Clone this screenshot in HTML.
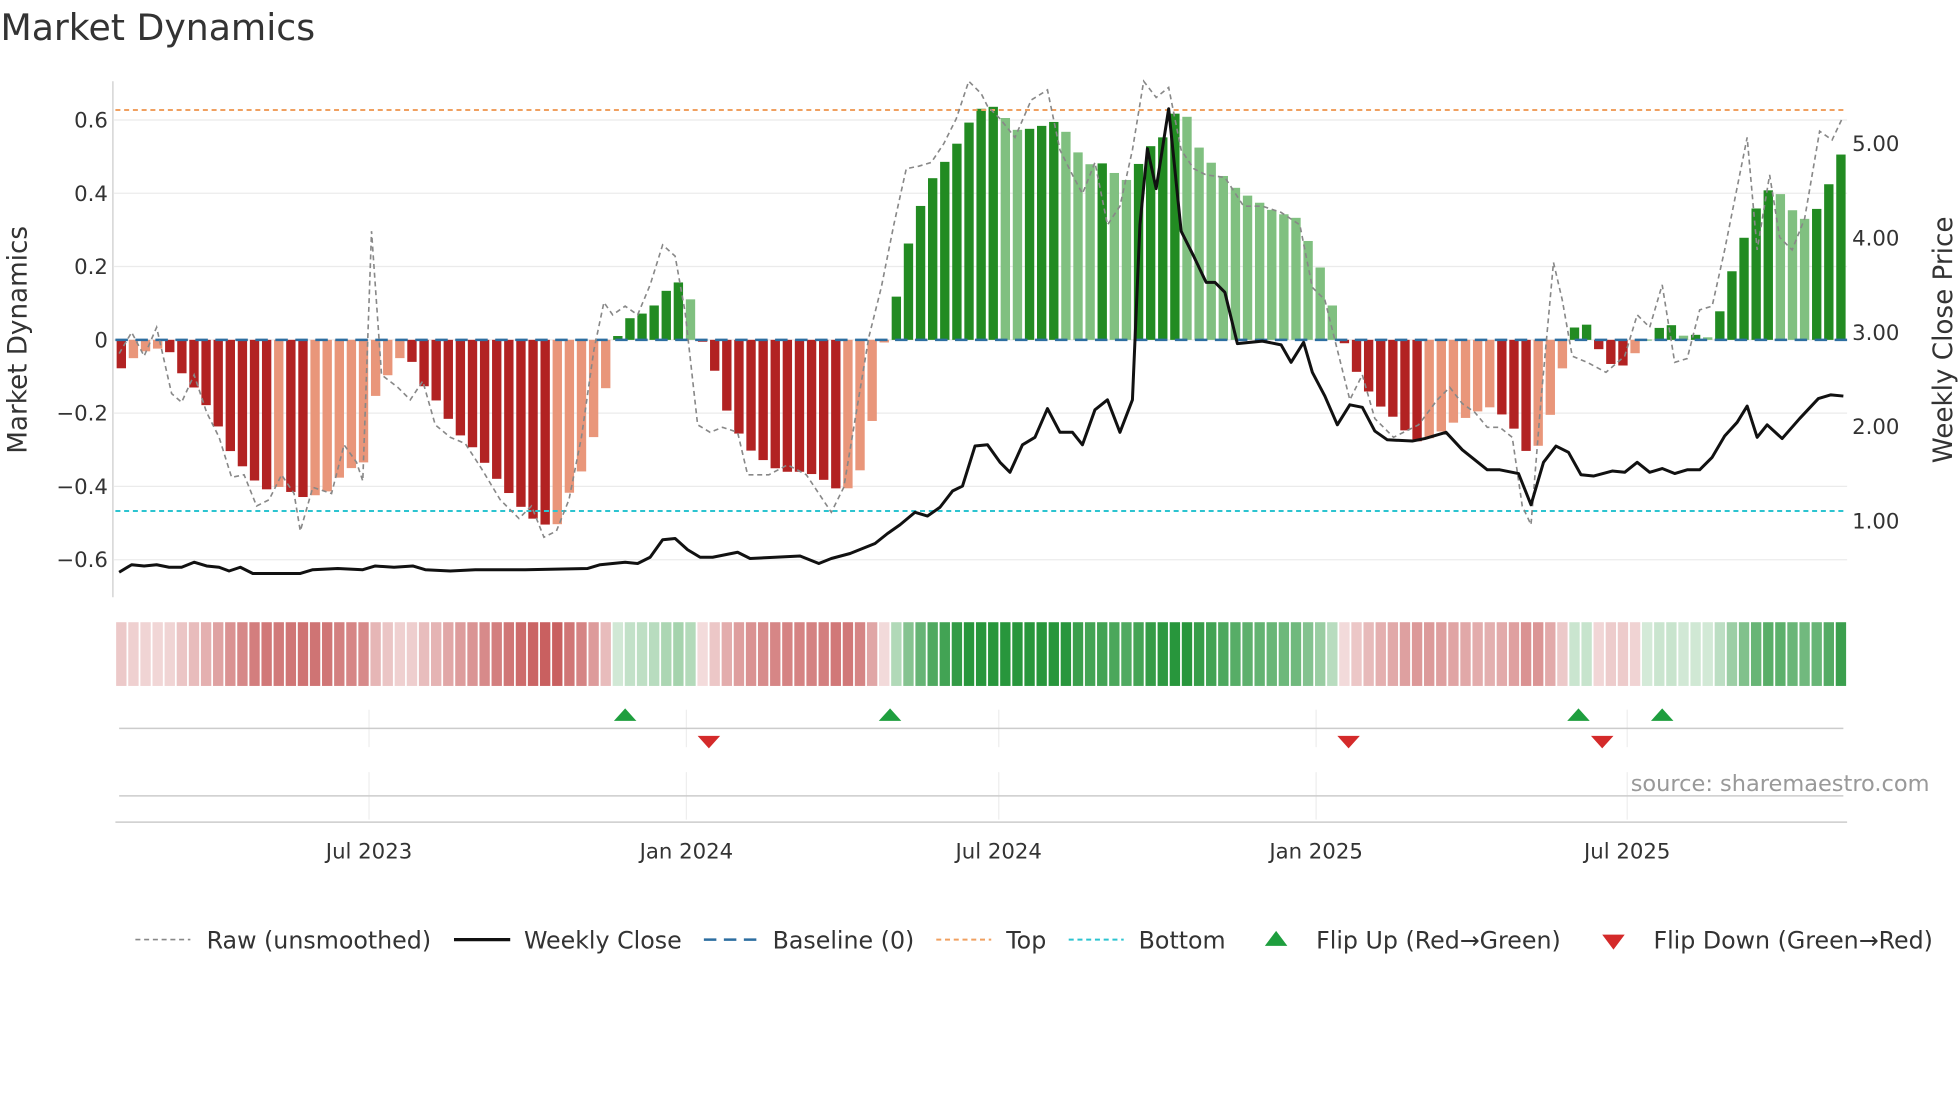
<!DOCTYPE html>
<html><head><meta charset="utf-8">
<style>
html,body{margin:0;padding:0;background:#fff;}
svg{display:block;}
text{font-family:"DejaVu Sans","Liberation Sans",sans-serif;fill:#333;}
</style></head>
<body>
<svg id="s" width="1960" height="1102" viewBox="0 0 1568 882" xmlns="http://www.w3.org/2000/svg">
<text x="0" y="32" font-size="29" fill="#333">Market Dynamics</text>
<g id="grid"></g>
<g id="bars"></g>
<g id="heat"></g>
<g id="lines"></g>
<g id="axes"></g>
</svg>
<script>
const NS="http://www.w3.org/2000/svg";
function el(p,t,a,txt){const e=document.createElementNS(NS,t);for(const k in a)e.setAttribute(k,a[k]);if(txt!==undefined)e.textContent=txt;document.getElementById(p).appendChild(e);return e;}
function interp(kp,x){if(x<=kp[0])return kp[1];for(let i=0;i<kp.length-2;i+=2){if(x>=kp[i]&&x<=kp[i+2]){const t=(x-kp[i])/(kp[i+2]-kp[i]);return kp[i+1]+t*(kp[i+3]-kp[i+1]);}}return kp[kp.length-1];}
const vy=v=>272-293.3*v;
[0.6,0.4,0.2,0,-0.2,-0.4,-0.6].forEach(v=>{const y=vy(v);el("grid","line",{x1:91,x2:1478,y1:y,y2:y,stroke:"#ebebeb","stroke-width":1});
el("axes","text",{x:86,y:y+6,"text-anchor":"end","font-size":17},(v===0?"0":v.toFixed(1).replace("-","−")));});
[[5,"5.00"],[4,"4.00"],[3,"3.00"],[2,"2.00"],[1,"1.00"]].forEach(([p,t])=>{const y=266-75.5*(p-3);el("axes","text",{x:1482,y:y+6,"font-size":17},t);});
el("axes","line",{x1:90,x2:90,y1:65,y2:478,stroke:"#ccc","stroke-width":1});
el("axes","text",{x:0,y:0,"font-size":21,transform:"translate(21,272) rotate(-90)","text-anchor":"middle"},"Market Dynamics");
el("axes","text",{x:0,y:0,"font-size":21,transform:"translate(1562,272) rotate(-90)","text-anchor":"middle"},"Weekly Close Price");
const bk=[92,-0.12,100,-0.05,110,-0.05,120,-0.02,135,-0.03,145,-0.09,160,-0.15,175,-0.24,185,-0.31,200,-0.37,210,-0.41,225,-0.40,240,-0.43,260,-0.42,270,-0.38,280,-0.35,290,-0.35,298,-0.17,305,-0.12,318,-0.06,325,-0.02,335,-0.11,350,-0.17,365,-0.25,380,-0.30,395,-0.37,405,-0.41,415,-0.45,430,-0.50,445,-0.51,455,-0.42,470,-0.33,482,-0.17,490,-0.05,497,0.05,520,0.08,532,0.13,540,0.16,548,0.15,558,0.06,563,-0.02,570,-0.06,578,-0.17,590,-0.25,600,-0.30,615,-0.34,625,-0.36,640,-0.36,655,-0.37,665,-0.40,672,-0.41,685,-0.40,692,-0.30,703,-0.15,708,0.01,712,0.02,722,0.21,733,0.33,742,0.42,752,0.47,762,0.51,772,0.58,790,0.65,800,0.62,815,0.57,830,0.58,848,0.60,860,0.52,875,0.47,887,0.49,895,0.43,905,0.44,917,0.52,930,0.55,945,0.65,960,0.52,975,0.46,990,0.41,1005,0.38,1020,0.35,1040,0.33,1050,0.24,1062,0.16,1070,0.03,1075,0.0,1080,-0.06,1090,-0.11,1100,-0.17,1112,-0.20,1125,-0.25,1135,-0.28,1150,-0.26,1160,-0.23,1175,-0.21,1190,-0.18,1205,-0.21,1215,-0.26,1225,-0.33,1235,-0.26,1245,-0.16,1252,-0.05,1258,0.0,1262,0.07,1270,0.04,1278,-0.02,1290,-0.07,1300,-0.07,1310,-0.03,1318,0.0,1330,0.04,1340,0.04,1350,0.0,1360,0.02,1370,0.0,1378,0.10,1388,0.21,1398,0.30,1408,0.38,1418,0.42,1430,0.38,1440,0.32,1448,0.34,1458,0.37,1466,0.45,1475,0.52];
const N=143,x0=92,sp=(1478-92)/N;let prev=0;
for(let i=0;i<N;i++){const x=x0+i*sp;const v=interp(bk,x+sp/2);let c;
 if(v>=0)c=(v>=prev)?"#228b22":"#80c080";else c=(v<=prev)?"#b22222":"#e9967a";
 const y=vy(v);el("bars","rect",{x:x+1,width:sp-2.2,y:Math.min(y,272),height:Math.max(Math.abs(y-272),0.5),fill:c});
 const a=Math.min(1,0.2+Math.abs(v)*1.4);
 const hc=v>=0?`rgba(40,150,60,${a})`:`rgba(195,80,80,${a})`;
 el("heat","rect",{x:x+0.6,width:sp-1.4,y:498,height:51,fill:hc});
 prev=v;}
el("lines","line",{x1:92,x2:1478,y1:88,y2:88,stroke:"#f0a060","stroke-width":1.6,"stroke-dasharray":"4,3"});
el("lines","line",{x1:92,x2:1478,y1:409,y2:409,stroke:"#2cc4d0","stroke-width":1.6,"stroke-dasharray":"4,3"});
el("lines","line",{x1:92,x2:1478,y1:272,y2:272,stroke:"#2d6ea0","stroke-width":2,"stroke-dasharray":"10,6"});
const raw=[95,283,105,266,115,285,125,262,137,315,145,322,155,300,165,330,175,350,185,382,195,380,205,405,215,400,225,380,235,395,240,425,250,390,265,395,275,356,285,370,290,385,297,185,305,300,318,310,328,320,338,305,348,340,360,350,372,355,385,375,400,400,415,415,425,405,435,430,445,425,455,400,465,350,475,280,483,242,490,252,500,245,510,252,520,228,530,196,540,205,548,250,558,340,568,346,578,342,590,346,598,380,615,380,630,372,645,380,655,395,665,410,675,390,685,330,695,270,705,230,715,180,725,135,735,133,745,130,755,115,765,95,775,65,785,75,790,85,800,95,812,110,825,80,838,72,848,120,858,140,866,155,876,130,886,180,896,165,906,120,915,65,925,78,935,70,945,120,955,135,965,140,980,142,995,165,1010,165,1025,170,1040,180,1050,230,1060,240,1070,280,1080,320,1090,300,1100,335,1115,350,1125,345,1135,340,1150,320,1160,310,1170,323,1180,330,1190,342,1200,342,1210,350,1218,405,1225,420,1233,320,1243,210,1250,240,1258,285,1270,290,1285,298,1300,285,1310,252,1320,262,1330,228,1340,290,1350,287,1360,248,1370,245,1380,200,1390,150,1398,110,1406,200,1416,140,1424,190,1434,200,1444,175,1456,105,1466,112,1474,95];
const pr=[95,458,105,452,115,453,125,452,135,454,145,454,155,450,165,453,175,454,183,457,192,454,202,459,240,459,250,456,270,455,290,456,300,453,315,454,330,453,340,456,360,457,380,456,400,456,420,456,470,455,480,452,500,450,510,451,520,446,530,432,540,431,550,440,560,446,570,446,590,442,600,447,620,446,640,445,655,451,665,447,680,443,700,435,710,427,720,420,732,410,742,413,752,406,762,393,770,389,780,357,790,356,800,370,808,378,818,356,828,350,838,327,848,346,858,346,866,356,876,328,886,320,896,346,906,320,912,180,918,119,925,151,935,87,945,185,955,205,965,226,972,226,980,234,990,275,1010,273,1025,276,1033,290,1043,274,1050,298,1060,317,1070,340,1080,324,1090,326,1100,345,1110,352,1130,353,1140,351,1157,346,1170,360,1190,376,1200,376,1215,379,1225,404,1235,370,1245,357,1255,362,1265,380,1275,381,1290,377,1300,378,1310,370,1320,378,1330,375,1340,379,1350,376,1360,376,1370,366,1380,349,1390,338,1398,325,1406,350,1414,340,1426,351,1440,335,1455,319,1465,316,1475,317];
const pts=a=>{let s="";for(let i=0;i<a.length;i+=2)s+=a[i]+","+a[i+1]+" ";return s;};
el("lines","polyline",{points:pts(raw),fill:"none",stroke:"#888","stroke-width":1.3,"stroke-dasharray":"4,3"});
el("lines","polyline",{points:pts(pr),fill:"none",stroke:"#111","stroke-width":2.4,"stroke-linejoin":"round"});
[295,549,799,1053,1302].forEach(x=>{el("axes","line",{x1:x,x2:x,y1:568,y2:598,stroke:"#eee"});el("axes","line",{x1:x,x2:x,y1:618,y2:656,stroke:"#eee"});});
el("axes","line",{x1:95,x2:1475,y1:583,y2:583,stroke:"#ccc","stroke-width":1.2});
el("axes","line",{x1:95,x2:1475,y1:637,y2:637,stroke:"#ccc","stroke-width":1.2});
el("axes","line",{x1:92,x2:1478,y1:658,y2:658,stroke:"#ccc","stroke-width":1.2});
[500,712,1263,1330].forEach(x=>el("axes","path",{d:`M${x-9},577 L${x+9},577 L${x},567 Z`,fill:"#1e9e3e"}));
[567,1079,1282].forEach(x=>el("axes","path",{d:`M${x-9},589 L${x+9},589 L${x},599 Z`,fill:"#d42a2a"}));
el("axes","text",{x:1544,y:633,"text-anchor":"end","font-size":18,style:"fill:#999"},"source: sharemaestro.com");
[[295,"Jul 2023"],[549,"Jan 2024"],[799,"Jul 2024"],[1053,"Jan 2025"],[1302,"Jul 2025"]].forEach(([x,t])=>el("axes","text",{x:x,y:687,"text-anchor":"middle","font-size":17},t));
const ly=752;
el("axes","line",{x1:108,x2:152,y1:ly,y2:ly,stroke:"#888","stroke-width":1.3,"stroke-dasharray":"4,3"});
el("axes","text",{x:165,y:ly+7,"font-size":19},"Raw (unsmoothed)");
el("axes","line",{x1:363,x2:408,y1:ly,y2:ly,stroke:"#111","stroke-width":2.6});
el("axes","text",{x:419,y:ly+7,"font-size":19},"Weekly Close");
el("axes","line",{x1:563,x2:607,y1:ly,y2:ly,stroke:"#2d6ea0","stroke-width":2,"stroke-dasharray":"10,6"});
el("axes","text",{x:618,y:ly+7,"font-size":19},"Baseline (0)");
el("axes","line",{x1:749,x2:793,y1:ly,y2:ly,stroke:"#f0a060","stroke-width":1.6,"stroke-dasharray":"4,3"});
el("axes","text",{x:805,y:ly+7,"font-size":19},"Top");
el("axes","line",{x1:855,x2:899,y1:ly,y2:ly,stroke:"#2cc4d0","stroke-width":1.6,"stroke-dasharray":"4,3"});
el("axes","text",{x:911,y:ly+7,"font-size":19},"Bottom");
el("axes","path",{d:"M1012,757 L1030,757 L1021,745 Z",fill:"#1e9e3e"});
el("axes","text",{x:1053,y:ly+7,"font-size":19},"Flip Up (Red→Green)");
el("axes","path",{d:"M1282,748 L1300,748 L1291,760 Z",fill:"#d42a2a"});
el("axes","text",{x:1323,y:ly+7,"font-size":19},"Flip Down (Green→Red)");
</script>
</body></html>
